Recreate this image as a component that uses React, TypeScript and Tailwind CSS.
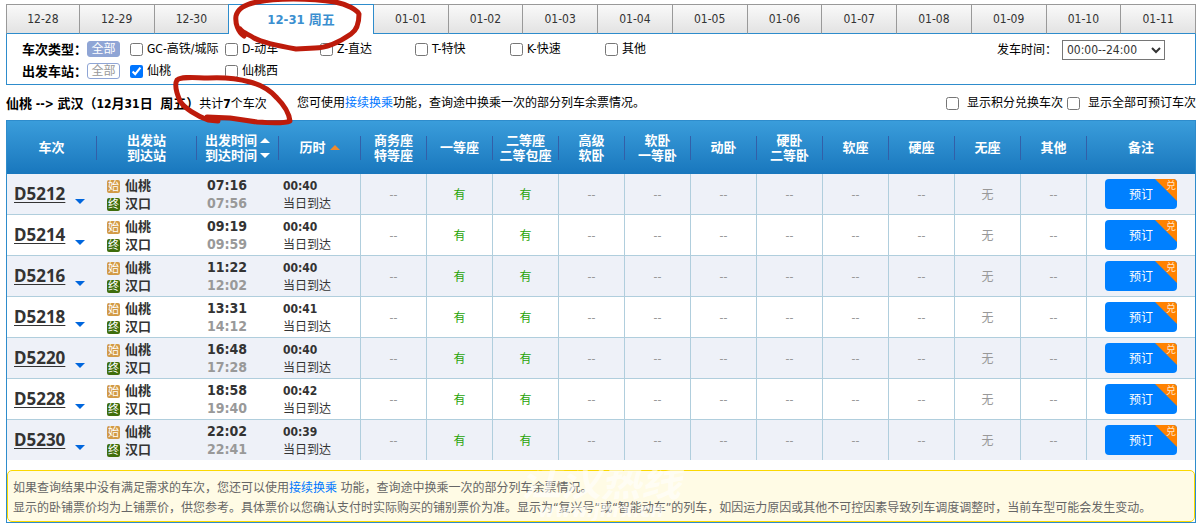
import { useState } from 'react'
import clsx from 'clsx'

const DATES = [
  '12-28', '12-29', '12-30', '12-31 周五', '01-01', '01-02', '01-03', '01-04',
  '01-05', '01-06', '01-07', '01-08', '01-09', '01-10', '01-11',
]

const TRAIN_TYPES = ['GC-高铁/城际', 'D-动车', 'Z-直达', 'T-特快', 'K-快速', '其他']

const SEATS = [
  ['商务座', '特等座'],
  ['一等座'],
  ['二等座', '二等包座'],
  ['高级', '软卧'],
  ['软卧', '一等卧'],
  ['动卧'],
  ['硬卧', '二等卧'],
  ['软座'],
  ['硬座'],
  ['无座'],
  ['其他'],
]

const AVAILABILITY = ['--', '有', '有', '--', '--', '--', '--', '--', '--', '无', '--']

const TRAINS = [
  { no: 'D5212', start: '07:16', end: '07:56', duration: '00:40' },
  { no: 'D5214', start: '09:19', end: '09:59', duration: '00:40' },
  { no: 'D5216', start: '11:22', end: '12:02', duration: '00:40' },
  { no: 'D5218', start: '13:31', end: '14:12', duration: '00:41' },
  { no: 'D5220', start: '16:48', end: '17:28', duration: '00:40' },
  { no: 'D5228', start: '18:58', end: '19:40', duration: '00:42' },
  { no: 'D5230', start: '22:02', end: '22:41', duration: '00:39' },
]

function Triangle({ down, className }: { down?: boolean; className?: string }) {
  return (
    <svg viewBox="0 0 10 5" className={clsx('w-[10px] h-[5px] shrink-0', className)} aria-hidden>
      <path d={down ? 'M0 0h10L5 5z' : 'M0 5h10L5 0z'} fill="currentColor" />
    </svg>
  )
}

function Check({ label, checked = false, className }: { label: string; checked?: boolean; className?: string }) {
  return (
    <label className={clsx('flex items-center whitespace-nowrap', className)}>
      <input type="checkbox" defaultChecked={checked} className="w-[13px] h-[13px] m-0 shrink-0" />
      {label}
    </label>
  )
}

function DateTabs() {
  const [active, setActive] = useState(3)
  return (
    <div className="flex h-[30px]">
      {DATES.map((date, i) => (
        <button
          key={date}
          type="button"
          onClick={() => setActive(i)}
          className={clsx(
            'min-w-0 border-t text-center whitespace-nowrap',
            i === active
              ? 'flex-[144] border-x border-[#2e8ccc] bg-white text-[13px] font-bold text-[#3b8fd0]'
              : 'border-t-[#999] border-b border-b-[#2e8ccc] bg-linear-to-b from-[#f9f9f9] to-[#e3e3e3] text-[#333]',
            i !== active && (i === 0 ? 'flex-[72] border-l border-l-[#999]' : 'flex-[74]'),
            i !== active && i + 1 !== active && 'border-r border-r-[#999]',
          )}
        >
          {date}
        </button>
      ))}
    </div>
  )
}

function Filters() {
  return (
    <div className="flex h-[51px] justify-between border border-t-0 border-[#2e8ccc] pl-[15px] pr-[30px] pt-1">
      <div>
        <div className="flex h-[22px] items-center">
          <span className="w-[65px] text-[13px] font-bold">车次类型：</span>
          <button type="button" className="mr-[10px] h-4 w-[33px] rounded-[3px] border border-[#8fa5d5] bg-[#8fa5d5] leading-3 text-white">
            全部
          </button>
          {TRAIN_TYPES.map((type) => (
            <Check key={type} label={type} className="w-[95px] gap-1" />
          ))}
        </div>
        <div className="flex h-[22px] items-center">
          <span className="w-[65px] text-[13px] font-bold">出发车站：</span>
          <button type="button" className="mr-[10px] h-4 w-[33px] rounded-[3px] border border-[#8fa5d5] leading-3 text-[#999]">
            全部
          </button>
          <Check label="仙桃" checked className="w-[95px] gap-1" />
          <Check label="仙桃西" className="w-[95px] gap-1" />
        </div>
      </div>
      <div className="flex h-6 items-center gap-[5px]">
        <label htmlFor="depart-time">发车时间：</label>
        <select id="depart-time" className="h-5 w-[103px] border border-[#767676] bg-white text-[#333]">
          <option>00:00--24:00</option>
          <option>00:00--06:00</option>
          <option>06:00--12:00</option>
          <option>12:00--18:00</option>
          <option>18:00--24:00</option>
        </select>
      </div>
    </div>
  )
}

function Summary() {
  return (
    <div className="flex h-[35px] items-center justify-between pt-[2px] whitespace-nowrap">
      <div className="flex items-center">
        <p className="w-[291px]">
          <strong>
            <span className="text-[13px]">仙桃</span> --&gt; <span className="text-[13px]">武汉（</span>12
            <span className="text-[13px]">月</span>31<span className="text-[13px]">日</span>&nbsp;{' '}
            <span className="text-[13px]">周五）</span>
          </strong>
          共计<strong>7</strong>个车次
        </p>
        <p>
          您可使用<a href="#transfer" className="text-[#0077ff]">接续换乘</a>功能，查询途中换乘一次的部分列车余票情况。
        </p>
      </div>
      <div className="flex items-center gap-1">
        <Check label="显示积分兑换车次" className="gap-2" />
        <Check label="显示全部可预订车次" className="gap-2" />
      </div>
    </div>
  )
}

function HeadCell({ lines, first }: { lines: string[]; first?: boolean }) {
  return (
    <th className="p-0">
      <div className={clsx('flex h-6 flex-col items-center justify-center whitespace-nowrap', !first && 'border-l border-[#335fa8]')}>
        {lines.map((line) => (
          <span key={line}>{line}</span>
        ))}
      </div>
    </th>
  )
}

function TrainTable() {
  return (
    <table className="w-full table-fixed border-separate border-spacing-0">
      <colgroup>
        <col className="w-[89px]" />
        <col className="w-[100px]" />
        <col className="w-[82px]" />
        <col className="w-[82px]" />
        {SEATS.map((seat) => (
          <col key={seat.join()} className="w-[66px]" />
        ))}
        <col />
      </colgroup>
      <thead className="bg-linear-to-b from-[#3a9ddb] to-[#1877bd] text-[13px] leading-[15px] text-white">
        <tr className="h-[53px]">
          <HeadCell lines={['车次']} first />
          <HeadCell lines={['出发站', '到达站']} />
          <th className="p-0">
            <div className="flex h-6 items-center justify-center gap-[3px] border-l border-[#335fa8]">
              <span className="whitespace-nowrap">出发时间<br />到达时间</span>
              <span className="flex flex-col gap-[10px]">
                <Triangle />
                <Triangle down />
              </span>
            </div>
          </th>
          <th className="p-0">
            <div className="flex h-6 items-center justify-center gap-1 border-l border-[#335fa8]">
              历时
              <Triangle className="text-[#f08a2c]" />
            </div>
          </th>
          {SEATS.map((seat) => (
            <HeadCell key={seat.join()} lines={seat} />
          ))}
          <HeadCell lines={['备注']} />
        </tr>
      </thead>
      <tbody>
        {TRAINS.map((train, i) => (
          <TrainRow key={train.no} train={train} odd={i % 2 === 0} last={i === TRAINS.length - 1} />
        ))}
      </tbody>
    </table>
  )
}

function TrainRow({ train, odd, last }: { train: (typeof TRAINS)[number]; odd: boolean; last: boolean }) {
  const cell = clsx('px-0 pb-0 border-[#b0cedd]', !last && 'border-b')
  return (
    <tr className={clsx('text-[#333]', last ? 'h-10' : 'h-[41px]', odd && 'bg-[#eef1f8]')}>
      <td className={clsx(cell, 'pt-0')}>
        <div className="flex items-center gap-2 pl-[7px]">
          <a
            href={`#${train.no}`}
            className="w-[53px] font-['Noto_Sans'] text-[17px] leading-6 font-bold underline underline-offset-2"
          >
            {train.no}
          </a>
          <Triangle down className="mt-[14px] text-[#0066dd]" />
        </div>
      </td>
      <td className={clsx(cell, 'pt-[2px]')}>
        <div className="pl-[11px] text-[13px] leading-[18px] font-bold">
          <div className="flex items-center gap-[5px]">
            <span className="h-[13px] w-[13px] rounded-[2px] bg-[#d29a45] text-center text-[11px] leading-[13px] font-normal text-white">始</span>
            仙桃
          </div>
          <div className="flex items-center gap-[5px]">
            <span className="h-[13px] w-[13px] rounded-[2px] bg-[#3f6d0c] text-center text-[11px] leading-[13px] font-normal text-white">终</span>
            汉口
          </div>
        </div>
      </td>
      <td className={clsx(cell, 'pt-0')}>
        <div className="pl-[11px] text-[14px] leading-[18px] font-bold">
          <div>{train.start}</div>
          <div className="text-[#999]">{train.end}</div>
        </div>
      </td>
      <td className={clsx(cell, 'pt-[2px]')}>
        <div className="pl-[5px] leading-[18px]">
          <div className="font-bold">{train.duration}</div>
          <div>当日到达</div>
        </div>
      </td>
      {AVAILABILITY.map((value, i) => (
        <td
          key={i}
          className={clsx(cell, 'border-l pt-[2px] text-center', value === '有' ? 'text-[#26a306]' : 'text-[#999]')}
        >
          {value}
        </td>
      ))}
      <td className={clsx(cell, 'border-l pt-0')}>
        <button type="button" className="relative mx-auto block h-[30px] w-[72px] overflow-hidden rounded-[4px] bg-[#0080ff] pt-[2px] text-white">
          预订
          <svg viewBox="0 0 22 22" className="absolute top-0 right-0 h-[22px] w-[22px]" aria-hidden>
            <path d="M0 0h22v22z" fill="#ff8201" />
          </svg>
          <span className="absolute top-[1px] right-[1px] text-[10px] leading-3 text-[#ffe5c8]">兑</span>
        </button>
      </td>
    </tr>
  )
}

function Notice() {
  return (
    <div className="relative mt-[10px] rounded-[5px] border border-[#fbd800] bg-[#fffbe5] px-[5px] pt-[7px] pb-[3px] leading-5 whitespace-nowrap text-[#666]">
      <p>
        如果查询结果中没有满足需求的车次，您还可以使用<a href="#transfer" className="text-[#0077ff]">接续换乘</a> 功能，查询途中换乘一次的部分列车余票情况。
      </p>
      <p>
        显示的卧铺票价均为上铺票价，供您参考。具体票价以您确认支付时实际购买的铺别票价为准。显示为“复兴号”或“智能动车”的列车，如因运力原因或其他不可控因素导致列车调度调整时，当前车型可能会发生变动。
      </p>
      {/* Site watermark */}
      <div className="pointer-events-none absolute -top-[3px] left-[508px] w-[170px] text-center font-bold italic text-white/60">
        <div className="text-[40px] leading-7">江汉热线</div>
        <div className="pt-1 text-[20px] leading-5">www.jhrx.cn</div>
      </div>
    </div>
  )
}

// Hand-drawn marks around the selected date and the train count
function Annotations() {
  return (
    <svg
      viewBox="0 0 400 130"
      className="pointer-events-none absolute top-0 left-0 h-[130px] w-[400px]"
      fill="none"
      stroke="#bd1b0b"
      strokeWidth="5"
      strokeLinecap="round"
      strokeLinejoin="round"
      aria-hidden
    >
      <path d="M244 36C238 32 235 23 236 16C238 8 246 4 257 2C275 -2 310 -2 335 2C347 4 357 10 359 14C359 21 357 30 351 34C341 41 328 48 315 48L296 49C284 47 263 43 254 38C248 34 243 33 240 29" />
      <path d="M218 121L208 120C197 116 184 108 180 101C177 94 174 85 177 80C183 76 196 78 208 78C225 77 239 79 250 82C262 85 271 91 277 98C285 106 289 113 290 121C284 124 270 123 257 122L230 118L207 117" />
    </svg>
  )
}

export default function App() {
  return (
    <div className="relative min-w-[1180px] bg-white pt-1 pr-[6px] pl-[6px] font-['DejaVu_Sans_Condensed','Noto_Sans_CJK_SC',sans-serif] text-[12px] leading-[15px] text-black">
      <DateTabs />
      <Filters />
      <Summary />
      <section className="border border-[#2e8ccc]">
        <TrainTable />
        <Notice />
      </section>
      <Annotations />
    </div>
  )
}
